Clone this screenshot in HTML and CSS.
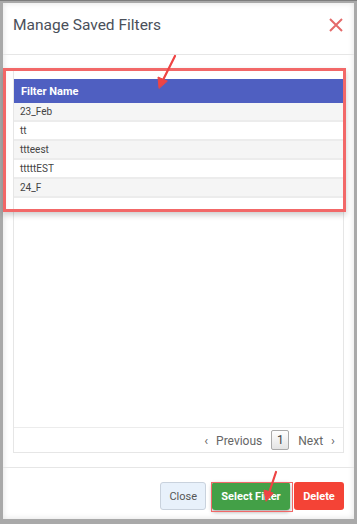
FILE: index.html
```html
<!DOCTYPE html>
<html lang="en">

<head>
   <meta charset="UTF-8">
   <title>Manage Saved Filters</title>
   <link rel="stylesheet" href="styles.css">
</head>

<body>
   <div class="modal">
      <!-- Başlık -->
      <div class="modal-header">
         <h2>Manage Saved Filters</h2>
         <span class="close-x">
            <svg width="16" height="16" viewBox="0 0 16 16">
               <path d="M2 2 L14 14 M14 2 L2 14" stroke="#e46a6a" stroke-width="2" fill="none" />
            </svg>
         </span>
      </div>

      <!-- Filtre listesi -->
      <div class="modal-body">
         <div class="list-box">
            <table class="filter-table">
               <thead>
                  <tr>
                     <th>Filter Name</th>
                  </tr>
               </thead>
               <tbody>
                  <tr><td>23_Feb</td></tr>
                  <tr><td>tt</td></tr>
                  <tr><td>ttteest</td></tr>
                  <tr><td>tttttEST</td></tr>
                  <tr><td>24_F</td></tr>
               </tbody>
            </table>
            <div class="pager">
               <span class="pager-link"><span class="chev chev-left">&lsaquo;</span>Previous</span>
               <span class="pager-page">1</span>
               <span class="pager-link">Next<span class="chev chev-right">&rsaquo;</span></span>
            </div>
         </div>
      </div>

      <!-- Butonlar -->
      <div class="modal-footer">
         <button class="btn btn-close">Close</button>
         <button class="btn btn-select">Select Filter</button>
         <button class="btn btn-delete">Delete</button>
      </div>

      <!-- Ekran görüntüsü işaretleri -->
      <div class="mark-box"></div>
      <div class="mark-btn"></div>
      <svg class="arrows" width="357" height="524" viewBox="0 0 357 524">
         <g stroke="#ee4444" stroke-width="2.2" fill="#ee4444" stroke-linecap="round">
            <line x1="175" y1="56" x2="163" y2="80" />
            <polygon points="159,88 158,77 167,81" stroke-width="1" />
            <line x1="276" y1="472" x2="269" y2="493" />
            <polygon points="266,501 264,490 273,493" stroke-width="1" />
         </g>
      </svg>
   </div>
</body>

</html>
```

FILE: styles.css
```css
/* Sayfa genel düzeni */
body {
   margin: 0;
   padding: 2px 3px 5px 3px;
   height: 524px;
   box-sizing: border-box;
   background: #a9a9a9;
   border-top: 1px solid #7d7d7d;
   font-family: Roboto, "Liberation Sans", sans-serif;
}

.modal {
   position: relative;
   height: 100%;
   background: #ffffff;
   display: flex;
   flex-direction: column;
   box-shadow: inset 0 0 6px rgba(0, 0, 0, 0.12);
}

/* Başlık */
.modal-header {
   display: flex;
   justify-content: space-between;
   align-items: flex-start;
   height: 51px;
   padding: 0 10px 0 10px;
   border-bottom: 1px solid #e6e6e6;
}

.modal-header h2 {
   margin: 13px 0 0 0;
   font-size: 15.5px;
   font-weight: normal;
   color: #4a505a;
}

.close-x {
   margin-top: 14px;
}

/* Liste */
.modal-body {
   flex: 1;
   padding: 13px 10px 14px 10px;
   display: flex;
}

.list-box {
   flex: 1;
   display: flex;
   flex-direction: column;
   border: 1px solid #e6e6e6;
   border-top: none;
   padding-top: 11px;
}

.filter-table {
   width: 100%;
   border-collapse: collapse;
}

.filter-table th {
   background: #4f5fc1;
   color: #ffffff;
   font-size: 11px;
   font-weight: bold;
   text-align: left;
   height: 24px;
   padding: 0 7px;
}

.filter-table td {
   font-size: 10px;
   color: #444;
   height: 17px;
   padding: 0 6px;
   border-bottom: 2px solid #ececec;
}

.filter-table tr:nth-child(odd) td {
   background: #f5f5f5;
}

.pager {
   margin-top: auto;
   display: flex;
   justify-content: flex-end;
   align-items: center;
   gap: 9px;
   height: 24px;
   padding-right: 8px;
   border-top: 1px solid #ececec;
   font-size: 12px;
   color: #666;
}

.chev {
   font-size: 13px;
}

.chev-left {
   margin-right: 8px;
}

.chev-right {
   margin-left: 8px;
}

.pager-page {
   display: inline-block;
   width: 16px;
   height: 18px;
   line-height: 18px;
   text-align: center;
   border: 1px solid #aaa;
   border-radius: 2px;
   background: linear-gradient(#fff, #e4e4e4);
   color: #444;
}

/* Butonlar */
.modal-footer {
   display: flex;
   justify-content: flex-end;
   align-items: flex-start;
   gap: 4px;
   height: 37px;
   padding: 14px 10px 0 0;
   border-top: 1px solid #e6e6e6;
}

.btn {
   height: 28px;
   border-radius: 3px;
   font-family: Roboto, "Liberation Sans", sans-serif;
   font-size: 11px;
   padding: 0 8px;
   cursor: pointer;
}

.btn-close {
   background: #e8f1fb;
   border: 1px solid #c9d2dd;
   color: #555;
}

.btn-select {
   background: #43a047;
   border: none;
   color: #fff;
   font-weight: bold;
   width: 78px;
   margin-left: 2px;
   box-shadow: 0 2px 4px rgba(0, 0, 0, 0.35);
}

.btn-delete {
   background: #f44336;
   border: none;
   color: #fff;
   font-weight: bold;
   width: 50px;
}

/* İşaretler */
.mark-box {
   position: absolute;
   left: 0;
   top: 65px;
   width: 337px;
   height: 138px;
   border: 3px solid #f26868;
   box-shadow: 0 3px 6px rgba(0, 0, 0, 0.2);
}

.mark-btn {
   position: absolute;
   left: 208px;
   top: 479px;
   width: 80px;
   height: 28px;
   border: 1px solid #f26868;
}

.arrows {
   position: absolute;
   left: -3px;
   top: -3px;
   pointer-events: none;
}
```
